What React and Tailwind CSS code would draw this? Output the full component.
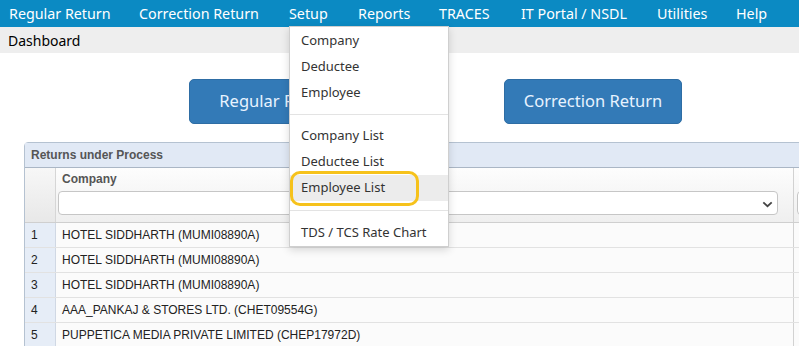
import React from "react";

const navItems = [
  ["Regular Return", "w-[130px]"],
  ["Correction Return", "w-[150px]"],
  ["Setup", "w-[69px]"],
  ["Reports", "w-[81px]"],
  ["TRACES", "w-[82px]"],
  ["IT Portal / NSDL", "w-[136px]"],
  ["Utilities", "w-[79px]"],
  ["Help", "w-[60px]"],
];

const rows = [
  "HOTEL SIDDHARTH (MUMI08890A)",
  "HOTEL SIDDHARTH (MUMI08890A)",
  "HOTEL SIDDHARTH (MUMI08890A)",
  "AAA_PANKAJ & STORES LTD. (CHET09554G)",
  "PUPPETICA MEDIA PRIVATE LIMITED (CHEP17972D)",
];

function Chevron() {
  return (
    <svg width="11" height="7" viewBox="0 0 11 7" className="absolute right-[4px] top-[9px]">
      <path d="M1.3 1.3 L5.5 5.2 L9.7 1.3" fill="none" stroke="#444" strokeWidth="1.8" />
    </svg>
  );
}

function Item({ children, active }) {
  return (
    <div className={`h-[26px] flex items-center pl-[11px] ${active ? "bg-[#ececec]" : ""}`}>
      {children}
    </div>
  );
}

export default function App() {
  const seg = { fontFamily: '"Noto Sans", "Open Sans", sans-serif' };
  const arial = { fontFamily: '"Liberation Sans", Arial, sans-serif' };
  return (
    <div className="relative w-[799px] h-[346px] overflow-hidden bg-white" style={seg}>
      {/* nav */}
      <div className="h-[27px] bg-[#0b8ac3] flex items-center pl-[9px] text-white text-[14.3px]">
        {navItems.map(([t, w]) => (
          <div key={t} className={`${w} shrink-0 whitespace-nowrap`}>{t}</div>
        ))}
      </div>
      {/* dashboard bar */}
      <div className="h-[26px] bg-[#eeeeee] flex items-center pl-[8px] text-[14px] text-black">
        Dashboard
      </div>
      {/* buttons */}
      <div className="flex pl-[189px] gap-[137px] pt-[26px]">
        <div className="w-[178px] h-[45px] rounded-[5px] bg-[#337ab7] border border-[#2e6da4] flex items-center justify-center text-[16.5px] text-[#e8f3ff]">
          Regular Return
        </div>
        <div className="w-[178px] h-[45px] rounded-[5px] bg-[#337ab7] border border-[#2e6da4] flex items-center justify-center text-[16.5px] text-[#e8f3ff]">
          Correction Return
        </div>
      </div>
      {/* panel */}
      <div className="ml-[24px] mt-[18px] w-[820px] border border-[#b5c2d1] rounded-tl-[4px] text-[12px]" style={arial}>
        <div className="h-[25px] bg-[#e1e9f5] border-b border-[#aab6c5] flex items-center pl-[6px] font-bold text-[#555]">
          Returns under Process
        </div>
        <div className="flex h-[55px] border-b border-[#cfcfcf]">
          <div className="w-[31px] shrink-0 bg-gradient-to-b from-[#f7f7f7] to-[#e8e8e8] border-r border-[#d6d6d6]" />
          <div className="flex-1 bg-gradient-to-b from-[#fdfdfd] to-[#efefef] flex">
            <div className="w-[738px] shrink-0 border-r border-[#d2d2d2] pl-[2px] pt-[2px]">
              <div className="font-bold text-[#555] pl-[4px] h-[18px] flex items-center">Company</div>
              <div className="relative mt-[3px] h-[24px] w-[720px] rounded-[4px] border border-[#c6c6c6] bg-white">
                <Chevron />
              </div>
            </div>
            <div className="pl-[3px] pt-[23px]">
              <div className="h-[24px] w-[40px] rounded-[4px] border border-[#c6c6c6] bg-white" />
            </div>
          </div>
        </div>
        {rows.map((r, i) => (
          <div key={i} className="flex h-[25px] border-b border-[#e2e2e2]">
            <div className="w-[31px] shrink-0 bg-[#e6edf7] border-r border-[#d0d8e4] flex items-center pl-[6px] text-[#222]">
              {i + 1}
            </div>
            <div className="w-[738px] shrink-0 bg-[#fbfbfb] border-r border-[#d2d2d2] flex items-center pl-[6px] text-[#222]">
              {r}
            </div>
            <div className="flex-1 bg-[#fbfbfb]" />
          </div>
        ))}
      </div>

      {/* dropdown */}
      <div className="absolute left-[289px] top-[26px] w-[160px] h-[221px] bg-white border border-[#cfcfcf] shadow-[0_3px_8px_rgba(0,0,0,0.15)] text-[13px] text-[#333] pt-[1px]">
        <Item>Company</Item>
        <Item>Deductee</Item>
        <Item>Employee</Item>
        <div className="my-[8px] h-px bg-[#e3e3e3]" />
        <Item>Company List</Item>
        <Item>Deductee List</Item>
        <div className="relative">
          <Item active>Employee List</Item>
          <div className="absolute left-[0px] top-[-4px] w-[129px] h-[35px] rounded-[10px] border-[3px] border-[#f6c21b]" />
        </div>
        <div className="my-[9px] h-px bg-[#e3e3e3]" />
        <Item>TDS / TCS Rate Chart</Item>
      </div>
    </div>
  );
}
